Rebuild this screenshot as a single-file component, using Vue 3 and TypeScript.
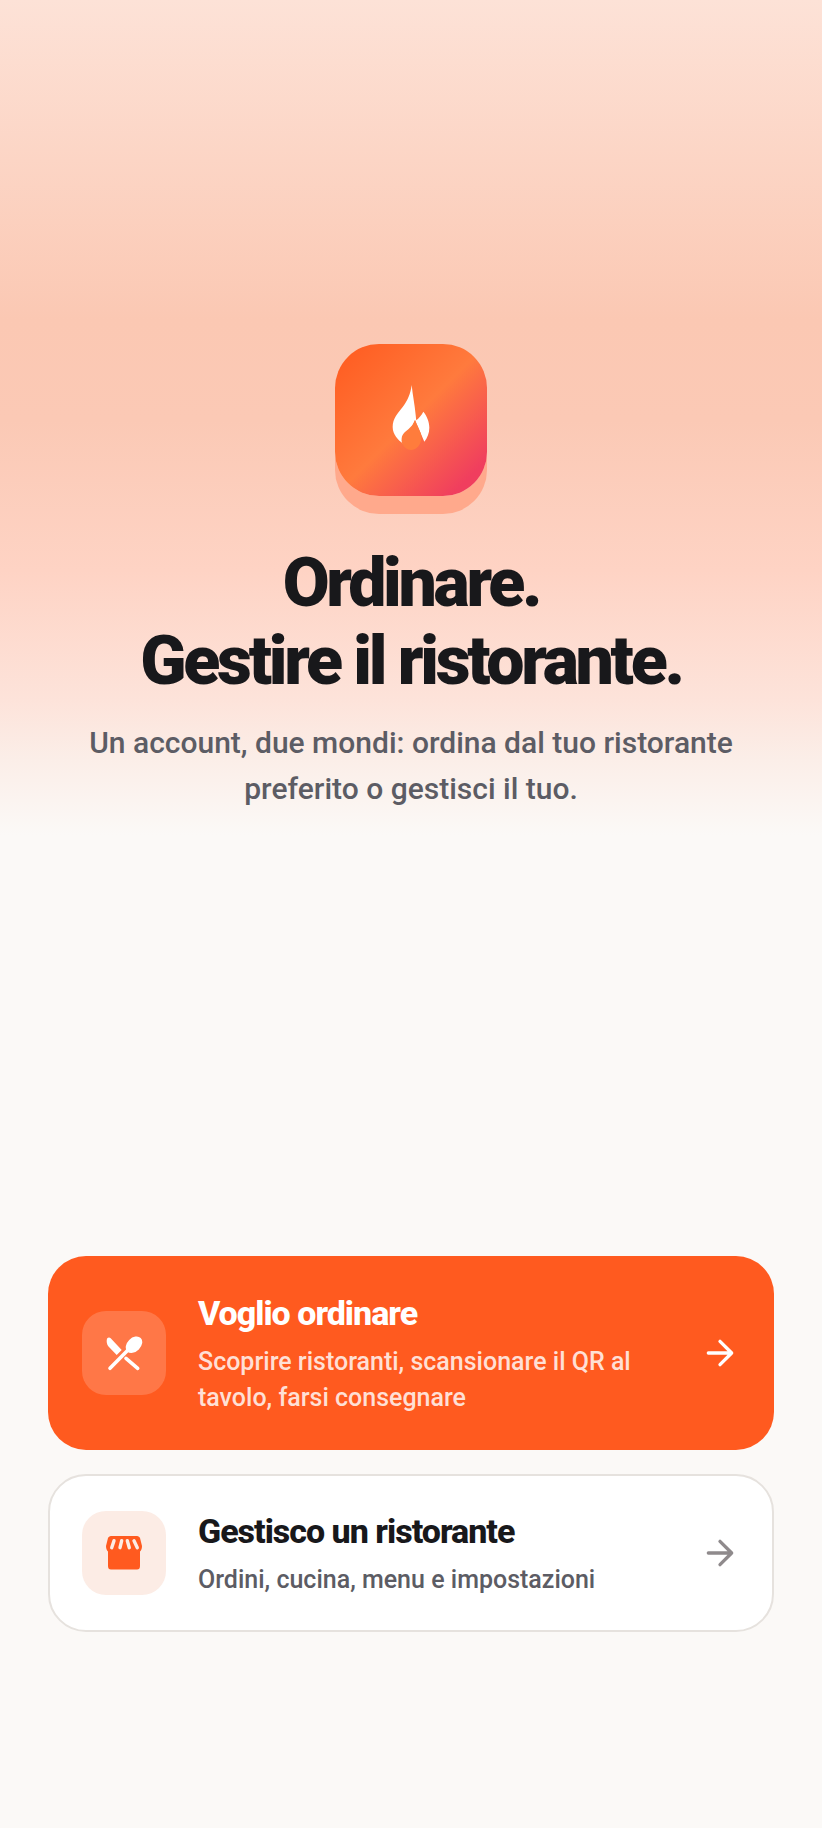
<template>
  <main class="page">
    <section class="hero">
      <div class="logo">
        <svg width="80" height="100" viewBox="3 15 240 300">
          <path fill="#fff" d="M125 60C128 90 134 118 137 150C138 158 138 162 139 166C146 160 154 152 160 140C170 152 178 170 178 188C178 204 172 218 163 230L135 165L100 236C84 226 68 208 68 186C68 160 84 144 98 126C112 108 122 86 125 60Z" />
          <path fill="#ff7c3c" d="M135 165C140 180 147 190 152 204C160 226 146 255 124 255C106 255 92 238 95 220C97 205 108 200 118 190C125 183 132 176 135 165Z" />
        </svg>
      </div>
      <h1>Ordinare.<br />Gestire il ristorante.</h1>
      <p class="lead">Un account, due mondi: ordina dal tuo ristorante preferito o gestisci il tuo.</p>
    </section>

    <section class="actions">
      <button class="card primary">
        <span class="icon-box">
          <svg width="40" height="40" viewBox="0 0 40 40">
            <path fill="#fff" d="M3.300 5.300C4 4.400 5.800 4.300 6.700 5.300L17.700 17L12.700 22L4.500 13.500C2.500 11.300 2.300 7 3.300 5.300Z" />
            <path fill="none" stroke="#fff" stroke-width="3.600" stroke-linecap="round" d="M6 35.300L26 15M22 25.300L33.700 35.300" />
            <ellipse fill="#fff" cx="30" cy="11.700" rx="9.500" ry="6.800" transform="rotate(-45 30 11.700)" />
          </svg>
        </span>
        <span class="copy">
          <span class="title">Voglio ordinare</span>
          <span class="desc">Scoprire ristoranti, scansionare il QR al tavolo, farsi consegnare</span>
        </span>
        <svg class="arrow" width="40" height="40" viewBox="0 0 24 24" fill="none" stroke="currentColor" stroke-width="2" stroke-linecap="round" stroke-linejoin="round">
          <path d="M5 12h14M12 5l7 7-7 7" />
        </svg>
      </button>

      <button class="card secondary">
        <span class="icon-box">
          <svg width="38" height="36" viewBox="0 0 38 36">
            <path fill="#ff5a1f" d="M6 1H32C33.500 1 34.500 2 35 3L37 11C37 14 36 15.500 35 16.500V31Q35 34.500 32 34.500H6Q3 34.500 3 31V16.500C2 15.500 1 14 1 11L3 3C3.500 2 4.500 1 6 1Z" />
            <path fill="none" stroke="#fcece5" stroke-width="3.400" stroke-linecap="round" d="M9 5.700L6.700 12.700M16.700 5.700L15 12.700M22.300 5.700L24.300 12.700M29 5.700L32.300 12.700" />
          </svg>
        </span>
        <span class="copy">
          <span class="title">Gestisco un ristorante</span>
          <span class="desc">Ordini, cucina, menu e impostazioni</span>
        </span>
        <svg class="arrow" width="40" height="40" viewBox="0 0 24 24" fill="none" stroke="currentColor" stroke-width="2" stroke-linecap="round" stroke-linejoin="round">
          <path d="M5 12h14M12 5l7 7-7 7" />
        </svg>
      </button>
    </section>
  </main>
</template>

<script setup lang="ts">
</script>

<style>
html,
body {
  margin: 0;
  background: #fbf9f7;
}
</style>

<style scoped>
.page {
  box-sizing: border-box;
  height: 1828px;
  padding: 344px 48px 0;
  display: flex;
  flex-direction: column;
  font-family: Roboto, "Liberation Sans", sans-serif;
  background: linear-gradient(180deg, #fde2d7 0, #fbc8b3 320px, #fbc9b5 420px, #fed3c4 570px, #fde3da 700px, #fbeee8 760px, #fbf9f7 835px);
}

.hero {
  display: flex;
  flex-direction: column;
  align-items: center;
  text-align: center;
}

.logo {
  width: 152px;
  height: 152px;
  border-radius: 44px;
  display: flex;
  align-items: center;
  justify-content: center;
  background: linear-gradient(135deg, #ff5a1f 0%, #ff7a3d 50%, #f03e5e 88%);
  box-shadow: 0 18px 0 #ffa98c;
}

h1 {
  margin: 48px 0 0;
  font-size: 68px;
  line-height: 78px;
  font-weight: 900;
  letter-spacing: -3.3px;
  color: #18181b;
}

.lead {
  margin: 20px 0 0;
  max-width: 680px;
  font-size: 30px;
  line-height: 46px;
  font-weight: 500;
  color: #5c5c64;
}

.actions {
  margin-top: auto;
  margin-bottom: 196px;
  display: flex;
  flex-direction: column;
  gap: 24px;
}

.card {
  display: flex;
  align-items: center;
  gap: 32px;
  width: 100%;
  padding: 32px;
  border: 2px solid transparent;
  border-radius: 38px;
  text-align: left;
  font-family: inherit;
}

.primary {
  background: #ff5a1f;
  color: #fff;
}

.secondary {
  background: #fff;
  border-color: #e6e2de;
  color: #18181b;
}

.icon-box {
  flex: none;
  width: 84px;
  height: 84px;
  border-radius: 24px;
  display: flex;
  align-items: center;
  justify-content: center;
}

.primary .icon-box {
  background: rgba(255, 255, 255, 0.18);
}

.secondary .icon-box {
  background: #fcece5;
}

.copy {
  flex: 1;
  display: flex;
  flex-direction: column;
  gap: 8px;
}

.title {
  font-size: 34px;
  line-height: 46px;
  font-weight: 800;
  letter-spacing: -1px;
}

.desc {
  font-size: 25px;
  line-height: 36px;
  font-weight: 500;
}

.primary .desc {
  color: rgba(255, 255, 255, 0.82);
}

.secondary .desc {
  color: #5c5c64;
}

.arrow {
  flex: none;
}

.primary .arrow {
  color: #fff;
}

.secondary .arrow {
  color: #8f8a8c;
}
</style>
